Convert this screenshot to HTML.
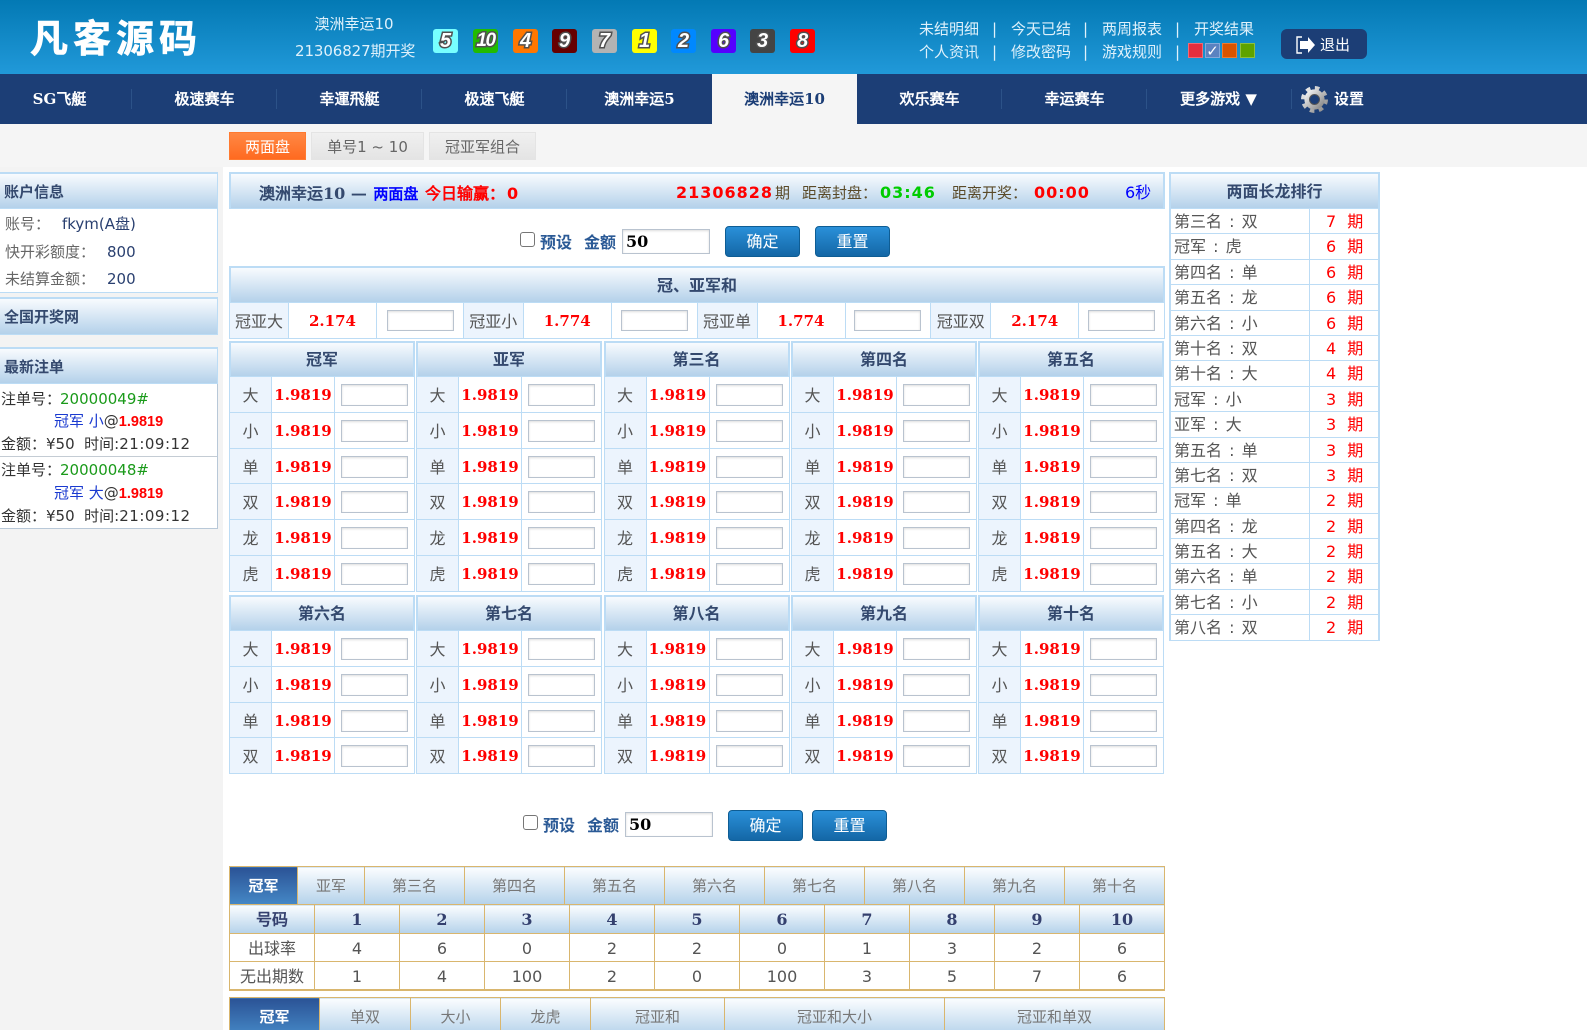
<!DOCTYPE html>
<html lang="zh"><head><meta charset="utf-8"><title>凡客源码</title>
<style>
*{box-sizing:border-box}
html,body{margin:0;padding:0;width:1587px;height:1030px;overflow:hidden;background:#fff}
body{position:relative;font:15px/1.2 "DejaVu Sans","WenQuanYi Zen Hei","Noto Sans CJK SC",sans-serif;color:#555}
.a{position:absolute;white-space:nowrap}
#top{left:0;top:0;width:1587px;height:74px;background:linear-gradient(#0379b4,#2199d9)}
#nav{left:0;top:74px;width:1587px;height:50px;background:#1c3e76}
#band{left:0;top:124px;width:1587px;height:43px;background:#f5f5f5}
#side{left:0;top:167px;width:223px;height:863px;background:#f3f3f3}
.logo{left:30px;top:13px;font:bold 38px/46px "Noto Sans CJK SC","WenQuanYi Zen Hei",sans-serif;letter-spacing:5px;color:#fff;-webkit-text-stroke:.6px #fff}
.w{color:#dff1fb}
.b{position:absolute;top:29px;width:25px;height:24px;border-radius:3px;text-align:center;font:italic bold 20px/24px "Liberation Sans",sans-serif;color:#fff;-webkit-text-stroke:3px #505050;paint-order:stroke fill}
.n{position:absolute;top:74px;width:145px;height:50px;line-height:50px;text-align:center;font-weight:bold;font-size:15px;color:#fff;font-family:"DejaVu Serif","WenQuanYi Zen Hei",serif}
.sp{position:absolute;top:89px;width:1px;height:20px;background:#2c5288}
.bar{background:linear-gradient(#f8fbfe,#b4d1ea);border:1px solid #bcdcf5;border-width:2px 2px 1px 2px;color:#34496e;font-weight:bold;font-size:16px;text-align:center}
.tab{top:132px;height:28px;line-height:28px;text-align:center;font-size:15px;color:#666;background:linear-gradient(#f0f0f0,#e4e4e4);border:1px solid #e4e4e4}
.pl{left:-3px;width:221px}
.pl.bar{text-align:left;padding-left:5px;font-size:15px;border-right-width:1px}
.lb{left:5px;font-size:15px;line-height:18px;color:#666}
.vl{font-size:15px;line-height:18px;color:#2a4070}
.ol{font-size:15px;line-height:18px;color:#333}
.g{color:#1a9a1a}.bl{color:#1a3ad0}
.odd{font:bold 14.5px/18px "Liberation Sans",sans-serif;color:#f00}
.btn{width:75px;height:31px;line-height:30px;border:1px solid #0e5d94;border-radius:4px;text-align:center;color:#fff;font-size:16px;background:linear-gradient(#2a90d9,#1467a6)}
.inp{border:1px solid #b9c3cf;background:#fff;box-shadow:inset 0 1px 2px #ddd;display:block}
.amt{width:88px;height:25px;font:bold 16px/24px "DejaVu Serif",serif;color:#000;padding-left:3px}
.cb{width:15px;height:15px;border:1px solid #767676;border-radius:3px;background:#fff}
.fl{font-size:16px;line-height:22px;color:#2b5a96;font-weight:bold}
.big{font:bold 16px/22px "DejaVu Sans",sans-serif;letter-spacing:1px}
.col{position:absolute;width:186px}
.col .bar{height:36px;line-height:34px}
.r{display:flex;height:35.8px;border:1px solid #bcdcf5;border-top:0;background:#fff}
.r b{width:42px;background:#ecf4fd;border-right:1px solid #bcdcf5;font-weight:normal;font-size:16px;line-height:37px;text-align:center;color:#555}
.r i{width:63px;border-right:1px solid #bcdcf5;font:bold 15px/37px "DejaVu Serif",serif;color:#f00;text-align:center}
.r u{flex:1;display:block;padding:7px 0 0 6px}
.r u .inp{width:67px;height:22px}
.s{position:absolute;left:229px;top:303px;width:936px;height:36px;border:1px solid #bcdcf5;border-top:0;display:flex}
.s b{width:60px;flex:none;background:#ecf4fd;border-right:1px solid #bcdcf5;font-weight:normal;font-size:16px;line-height:37px;text-align:center;color:#555;white-space:nowrap}
.s b:first-child{width:59px}
.s i{width:88px;flex:none;border-right:1px solid #bcdcf5;font:bold 15px/37px "DejaVu Serif",serif;color:#f00;text-align:center}
.s u{width:85.75px;flex:none;display:block;border-right:1px solid #bcdcf5;padding:7px 0 0 9px}
.s u:nth-child(3){width:86.75px;padding-left:10px}
.s u:nth-child(9){padding-left:8px}
.s u:last-child{border-right:0}
.s u .inp{width:67px;height:21px}
#rk{position:absolute;left:1169px;top:172px;width:211px}
#rk .bar{height:37px;line-height:36px}
.k{display:flex;height:25.4px;border:2px solid #bcdcf5;border-width:0 2px 1px 2px;background:#fff;line-height:25px;font-size:16px}
.k span{width:139px;padding-left:3px;border-right:1px solid #bcdcf5;color:#555;white-space:nowrap;word-spacing:2px}
.k em{font-style:normal;color:#f00;padding-left:16px}
.k em s{text-decoration:none;margin-left:11px}
table{position:absolute;left:229px;width:935px;table-layout:fixed;border-collapse:collapse;text-align:center}
td{border:1px solid #d9b66e;padding:0;font-size:16px;color:#555;background:#fff}
.tt td{background:linear-gradient(#fbfdff,#b5d2ea);font-size:15px;color:#777;height:38px}
.tt td.on{background:linear-gradient(#2b5396,#4588c6);color:#fff;font-weight:bold}
.hd td{background:linear-gradient(#fbfdff,#b5d2ea);font:bold 16px/1 "DejaVu Serif","WenQuanYi Zen Hei",serif;color:#34406e;height:29px;padding-top:2px}
.ro td{height:28px;padding-top:2px}
</style></head><body>
<div class="a" id="top"></div><div class="a" id="nav"></div><div class="a" id="band"></div><div class="a" id="side"></div>
<div class="a logo">凡客源码</div>
<div class="a w" style="left:294px;width:120px;top:15px;line-height:18px;text-align:center">澳洲幸运10</div>
<div class="a w" style="left:295px;top:42px;line-height:18px;letter-spacing:-.1px">21306827期开奖</div>
<span class="b" style="left:433px;background:#7ff">5</span>
<span class="b" style="left:473px;background:#2b0;letter-spacing:-1.5px;font-size:19px">10</span>
<span class="b" style="left:513px;background:#f70">4</span>
<span class="b" style="left:552px;background:#600">9</span>
<span class="b" style="left:592px;background:#b3b3b3">7</span>
<span class="b" style="left:632px;background:#ff0">1</span>
<span class="b" style="left:671px;background:#08f">2</span>
<span class="b" style="left:711px;background:#50f">6</span>
<span class="b" style="left:750px;background:#444">3</span>
<span class="b" style="left:790px;background:#f00">8</span>

<div class="a w" style="left:919px;top:20px;line-height:18px">未结明细</div><div class="a w" style="left:992px;top:20px;line-height:18px">|</div>
<div class="a w" style="left:1011px;top:20px;line-height:18px">今天已结</div><div class="a w" style="left:1083px;top:20px;line-height:18px">|</div>
<div class="a w" style="left:1102px;top:20px;line-height:18px">两周报表</div><div class="a w" style="left:1175px;top:20px;line-height:18px">|</div>
<div class="a w" style="left:1194px;top:20px;line-height:18px">开奖结果</div>
<div class="a w" style="left:919px;top:43px;line-height:18px">个人资讯</div><div class="a w" style="left:992px;top:43px;line-height:18px">|</div>
<div class="a w" style="left:1011px;top:43px;line-height:18px">修改密码</div><div class="a w" style="left:1083px;top:43px;line-height:18px">|</div>
<div class="a w" style="left:1102px;top:43px;line-height:18px">游戏规则</div><div class="a w" style="left:1175px;top:43px;line-height:18px">|</div>
<div class="a" style="left:1188px;top:43px;width:15px;height:15px;background:#e52e3d;border:1px solid #f06a75"></div>
<div class="a" style="left:1205px;top:43px;width:15px;height:15px;background:#5b82c0;border:1px solid #86a8d8;color:#fff;font-size:15px;line-height:14px;text-align:center">✓</div>
<div class="a" style="left:1222px;top:43px;width:15px;height:15px;background:#d95400;border:1px solid #ee7a30"></div>
<div class="a" style="left:1240px;top:43px;width:15px;height:15px;background:#5ea300;border:1px solid #8cc040"></div>
<div class="a" style="left:1281px;top:29px;width:86px;height:30px;background:#1c3e76;border-radius:6px"></div>
<svg class="a" style="left:1295px;top:36px" width="22" height="18" viewBox="0 0 22 18"><path d="M7 1H2V17H7" fill="none" stroke="#fff" stroke-width="1.4"/><path d="M5 5H13V1L20 9L13 17V13H5Z" fill="#fff"/></svg>
<div class="a" style="left:1320px;top:36px;color:#fff;line-height:18px">退出</div>

<div class="n" style="left:-13px">SG飞艇</div><div class="n" style="left:132px">极速赛车</div><div class="n" style="left:277px">幸運飛艇</div><div class="n" style="left:422px">极速飞艇</div><div class="n" style="left:567px">澳洲幸运5</div>
<div class="n" style="left:712px;background:#f5f5f5;color:#1c3e76">澳洲幸运10</div>
<div class="n" style="left:857px">欢乐赛车</div><div class="n" style="left:1002px">幸运赛车</div><div class="n" style="left:1146px">更多游戏 ▼</div>
<div class="sp" style="left:131px"></div><div class="sp" style="left:276px"></div><div class="sp" style="left:421px"></div><div class="sp" style="left:566px"></div><div class="sp" style="left:1001px"></div><div class="sp" style="left:1146px"></div><div class="sp" style="left:1291px"></div>
<svg class="a" style="left:1301px;top:86px" width="27" height="27" viewBox="0 0 27 27"><defs><linearGradient id="gg" x1="0" y1="0" x2="1" y2="1"><stop offset="0" stop-color="#f2f2f2"/><stop offset="1" stop-color="#8a8a8a"/></linearGradient></defs><circle cx="13.5" cy="13.5" r="11.2" fill="none" stroke="url(#gg)" stroke-width="4.6" stroke-dasharray="4.4 4.4"/><circle cx="13.5" cy="13.5" r="7.6" fill="none" stroke="url(#gg)" stroke-width="5"/><circle cx="13.5" cy="13.5" r="5" fill="#1c3e76" stroke="#555" stroke-width="1"/></svg>
<div class="a" style="left:1334px;top:90px;color:#fff;font-weight:bold;line-height:18px">设置</div>

<div class="a tab" style="left:229px;width:77px;background:linear-gradient(#ff8844,#ff6a20);border-color:#ff7a30;color:#fff">两面盘</div>
<div class="a tab" style="left:311px;width:113px">单号1 ~ 10</div>
<div class="a tab" style="left:429px;width:107px">冠亚军组合</div>

<!-- left -->
<div class="a bar pl" style="top:172px;height:37px;line-height:37px">账户信息</div>
<div class="a" style="left:-3px;top:209px;width:221px;height:84px;background:#fff;border:1px solid #bcdcf5;border-top:0"></div>
<div class="a lb" style="top:215px">账号：</div><div class="a vl" style="left:62px;top:215px">fkym(A盘)</div>
<div class="a lb" style="top:243px">快开彩额度：</div><div class="a vl" style="left:107px;top:243px">800</div>
<div class="a lb" style="top:270px">未结算金额：</div><div class="a vl" style="left:107px;top:270px">200</div>
<div class="a bar pl" style="top:297px;height:38px;line-height:36px">全国开奖网</div>
<div class="a bar pl" style="top:347px;height:37px;line-height:37px">最新注单</div>
<div class="a" style="left:-3px;top:384px;width:221px;height:145px;background:#fff;border:1px solid #b8c8d8;border-top:0"></div>
<div class="a" style="left:0;top:456px;width:217px;height:1px;background:#c4ccd4"></div>
<div class="a ol" style="left:1px;top:390px">注单号：<span class="g" style="margin-left:-1px">20000049#</span></div>
<div class="a ol bl" style="left:54px;top:412px">冠军 小<span style="color:#333">@</span><span class="odd">1.9819</span></div>
<div class="a ol" style="left:1px;top:435px">金额：¥50&nbsp; 时间:<span style="letter-spacing:.5px">21:09:12</span></div>
<div class="a ol" style="left:1px;top:461px">注单号：<span class="g" style="margin-left:-1px">20000048#</span></div>
<div class="a ol bl" style="left:54px;top:484px">冠军 大<span style="color:#333">@</span><span class="odd">1.9819</span></div>
<div class="a ol" style="left:1px;top:507px">金额：¥50&nbsp; 时间:<span style="letter-spacing:.5px">21:09:12</span></div>

<!-- title -->
<div class="a bar" style="left:229px;top:172px;width:936px;height:37px"></div>
<div class="a" style="left:259px;top:183px;font:bold 16px/20px 'DejaVu Serif','WenQuanYi Zen Hei',serif;color:#34496e">澳洲幸运10 — <span style="color:#00f;font-size:15px;margin-left:1px">两面盘</span> <span style="color:#f00;margin-left:1px">今日输赢：<span class="big" style="margin-left:2px">0</span></span></div>
<div class="a big" style="left:676px;top:182px;color:#f00">21306828</div>
<div class="a" style="left:775px;top:184px;line-height:18px;color:#5a4a28;font-size:15px">期</div>
<div class="a" style="left:802px;top:184px;line-height:18px;color:#5a4a28">距离封盘：</div>
<div class="a big" style="left:880px;top:182px;color:#0c0">03:46</div>
<div class="a" style="left:952px;top:184px;line-height:18px;color:#5a4a28">距离开奖：</div>
<div class="a big" style="left:1034px;top:182px;color:#f00">00:00</div>
<div class="a" style="left:1125px;top:184px;line-height:18px;color:#00f;font-size:16px">6秒</div>

<!-- form top -->
<div class="a cb" style="left:520px;top:232px"></div>
<div class="a fl" style="left:540px;top:232px">预设</div><div class="a fl" style="left:584px;top:232px">金额</div>
<div class="a inp amt" style="left:622px;top:229px">50</div>
<div class="a btn" style="left:725px;top:226px">确定</div><div class="a btn" style="left:815px;top:226px">重置</div>

<!-- sum -->
<div class="a bar" style="left:229px;top:266px;width:936px;height:37px;line-height:36px">冠、亚军和</div>
<div class="s"><b>冠亚大</b><i>2.174</i><u><span class="inp"></span></u><b>冠亚小</b><i>1.774</i><u><span class="inp"></span></u><b>冠亚单</b><i>1.774</i><u><span class="inp"></span></u><b>冠亚双</b><i>2.174</i><u><span class="inp"></span></u></div>

<!-- section 1 -->
<div class="col" style="left:229px;top:341px"><div class="bar">冠军</div>
<div class="r"><b>大</b><i>1.9819</i><u><span class="inp"></span></u></div><div class="r"><b>小</b><i>1.9819</i><u><span class="inp"></span></u></div><div class="r"><b>单</b><i>1.9819</i><u><span class="inp"></span></u></div><div class="r"><b>双</b><i>1.9819</i><u><span class="inp"></span></u></div><div class="r"><b>龙</b><i>1.9819</i><u><span class="inp"></span></u></div><div class="r"><b>虎</b><i>1.9819</i><u><span class="inp"></span></u></div></div>
<div class="col" style="left:416px;top:341px"><div class="bar">亚军</div>
<div class="r"><b>大</b><i>1.9819</i><u><span class="inp"></span></u></div><div class="r"><b>小</b><i>1.9819</i><u><span class="inp"></span></u></div><div class="r"><b>单</b><i>1.9819</i><u><span class="inp"></span></u></div><div class="r"><b>双</b><i>1.9819</i><u><span class="inp"></span></u></div><div class="r"><b>龙</b><i>1.9819</i><u><span class="inp"></span></u></div><div class="r"><b>虎</b><i>1.9819</i><u><span class="inp"></span></u></div></div>
<div class="col" style="left:603.5px;top:341px"><div class="bar">第三名</div>
<div class="r"><b>大</b><i>1.9819</i><u><span class="inp"></span></u></div><div class="r"><b>小</b><i>1.9819</i><u><span class="inp"></span></u></div><div class="r"><b>单</b><i>1.9819</i><u><span class="inp"></span></u></div><div class="r"><b>双</b><i>1.9819</i><u><span class="inp"></span></u></div><div class="r"><b>龙</b><i>1.9819</i><u><span class="inp"></span></u></div><div class="r"><b>虎</b><i>1.9819</i><u><span class="inp"></span></u></div></div>
<div class="col" style="left:791px;top:341px"><div class="bar">第四名</div>
<div class="r"><b>大</b><i>1.9819</i><u><span class="inp"></span></u></div><div class="r"><b>小</b><i>1.9819</i><u><span class="inp"></span></u></div><div class="r"><b>单</b><i>1.9819</i><u><span class="inp"></span></u></div><div class="r"><b>双</b><i>1.9819</i><u><span class="inp"></span></u></div><div class="r"><b>龙</b><i>1.9819</i><u><span class="inp"></span></u></div><div class="r"><b>虎</b><i>1.9819</i><u><span class="inp"></span></u></div></div>
<div class="col" style="left:978px;top:341px"><div class="bar">第五名</div>
<div class="r"><b>大</b><i>1.9819</i><u><span class="inp"></span></u></div><div class="r"><b>小</b><i>1.9819</i><u><span class="inp"></span></u></div><div class="r"><b>单</b><i>1.9819</i><u><span class="inp"></span></u></div><div class="r"><b>双</b><i>1.9819</i><u><span class="inp"></span></u></div><div class="r"><b>龙</b><i>1.9819</i><u><span class="inp"></span></u></div><div class="r"><b>虎</b><i>1.9819</i><u><span class="inp"></span></u></div></div>

<!-- section 2 -->
<div class="col" style="left:229px;top:595px"><div class="bar">第六名</div>
<div class="r"><b>大</b><i>1.9819</i><u><span class="inp"></span></u></div><div class="r"><b>小</b><i>1.9819</i><u><span class="inp"></span></u></div><div class="r"><b>单</b><i>1.9819</i><u><span class="inp"></span></u></div><div class="r"><b>双</b><i>1.9819</i><u><span class="inp"></span></u></div></div>
<div class="col" style="left:416px;top:595px"><div class="bar">第七名</div>
<div class="r"><b>大</b><i>1.9819</i><u><span class="inp"></span></u></div><div class="r"><b>小</b><i>1.9819</i><u><span class="inp"></span></u></div><div class="r"><b>单</b><i>1.9819</i><u><span class="inp"></span></u></div><div class="r"><b>双</b><i>1.9819</i><u><span class="inp"></span></u></div></div>
<div class="col" style="left:603.5px;top:595px"><div class="bar">第八名</div>
<div class="r"><b>大</b><i>1.9819</i><u><span class="inp"></span></u></div><div class="r"><b>小</b><i>1.9819</i><u><span class="inp"></span></u></div><div class="r"><b>单</b><i>1.9819</i><u><span class="inp"></span></u></div><div class="r"><b>双</b><i>1.9819</i><u><span class="inp"></span></u></div></div>
<div class="col" style="left:791px;top:595px"><div class="bar">第九名</div>
<div class="r"><b>大</b><i>1.9819</i><u><span class="inp"></span></u></div><div class="r"><b>小</b><i>1.9819</i><u><span class="inp"></span></u></div><div class="r"><b>单</b><i>1.9819</i><u><span class="inp"></span></u></div><div class="r"><b>双</b><i>1.9819</i><u><span class="inp"></span></u></div></div>
<div class="col" style="left:978px;top:595px"><div class="bar">第十名</div>
<div class="r"><b>大</b><i>1.9819</i><u><span class="inp"></span></u></div><div class="r"><b>小</b><i>1.9819</i><u><span class="inp"></span></u></div><div class="r"><b>单</b><i>1.9819</i><u><span class="inp"></span></u></div><div class="r"><b>双</b><i>1.9819</i><u><span class="inp"></span></u></div></div>

<!-- form bottom -->
<div class="a cb" style="left:523px;top:815px"></div>
<div class="a fl" style="left:543px;top:815px">预设</div><div class="a fl" style="left:587px;top:815px">金额</div>
<div class="a inp amt" style="left:625px;top:812px">50</div>
<div class="a btn" style="left:728px;top:810px">确定</div><div class="a btn" style="left:812px;top:810px">重置</div>

<!-- bottom tables -->
<table style="top:866px"><colgroup><col style="width:68px"><col style="width:67px"><col style="width:100px"><col style="width:100px"><col style="width:100px"><col style="width:100px"><col style="width:100px"><col style="width:100px"><col style="width:100px"><col style="width:100px"></colgroup>
<tr class="tt"><td class="on">冠军</td><td>亚军</td><td>第三名</td><td>第四名</td><td>第五名</td><td>第六名</td><td>第七名</td><td>第八名</td><td>第九名</td><td>第十名</td></tr></table>
<table style="top:904px;border-bottom:2px solid #d9b66e"><colgroup><col style="width:85px"><col span="10" style="width:85px"></colgroup>
<tr class="hd"><td>号码</td><td>1</td><td>2</td><td>3</td><td>4</td><td>5</td><td>6</td><td>7</td><td>8</td><td>9</td><td>10</td></tr>
<tr class="ro"><td>出球率</td><td>4</td><td>6</td><td>0</td><td>2</td><td>2</td><td>0</td><td>1</td><td>3</td><td>2</td><td>6</td></tr>
<tr class="ro"><td>无出期数</td><td>1</td><td>4</td><td>100</td><td>2</td><td>0</td><td>100</td><td>3</td><td>5</td><td>7</td><td>6</td></tr></table>
<table style="top:997px"><colgroup><col style="width:90px"><col style="width:91px"><col style="width:90px"><col style="width:90px"><col style="width:134px"><col style="width:220px"><col style="width:220px"></colgroup>
<tr class="tt"><td class="on">冠军</td><td>单双</td><td>大小</td><td>龙虎</td><td>冠亚和</td><td>冠亚和大小</td><td>冠亚和单双</td></tr></table>

<!-- right rank -->
<div id="rk"><div class="bar">两面长龙排行</div>
<div class="k"><span>第三名 : 双</span><em>7<s>期</s></em></div>
<div class="k"><span>冠军 : 虎</span><em>6<s>期</s></em></div>
<div class="k"><span>第四名 : 单</span><em>6<s>期</s></em></div>
<div class="k"><span>第五名 : 龙</span><em>6<s>期</s></em></div>
<div class="k"><span>第六名 : 小</span><em>6<s>期</s></em></div>
<div class="k"><span>第十名 : 双</span><em>4<s>期</s></em></div>
<div class="k"><span>第十名 : 大</span><em>4<s>期</s></em></div>
<div class="k"><span>冠军 : 小</span><em>3<s>期</s></em></div>
<div class="k"><span>亚军 : 大</span><em>3<s>期</s></em></div>
<div class="k"><span>第五名 : 单</span><em>3<s>期</s></em></div>
<div class="k"><span>第七名 : 双</span><em>3<s>期</s></em></div>
<div class="k"><span>冠军 : 单</span><em>2<s>期</s></em></div>
<div class="k"><span>第四名 : 龙</span><em>2<s>期</s></em></div>
<div class="k"><span>第五名 : 大</span><em>2<s>期</s></em></div>
<div class="k"><span>第六名 : 单</span><em>2<s>期</s></em></div>
<div class="k"><span>第七名 : 小</span><em>2<s>期</s></em></div>
<div class="k"><span>第八名 : 双</span><em>2<s>期</s></em></div>
</div>
</body></html>
